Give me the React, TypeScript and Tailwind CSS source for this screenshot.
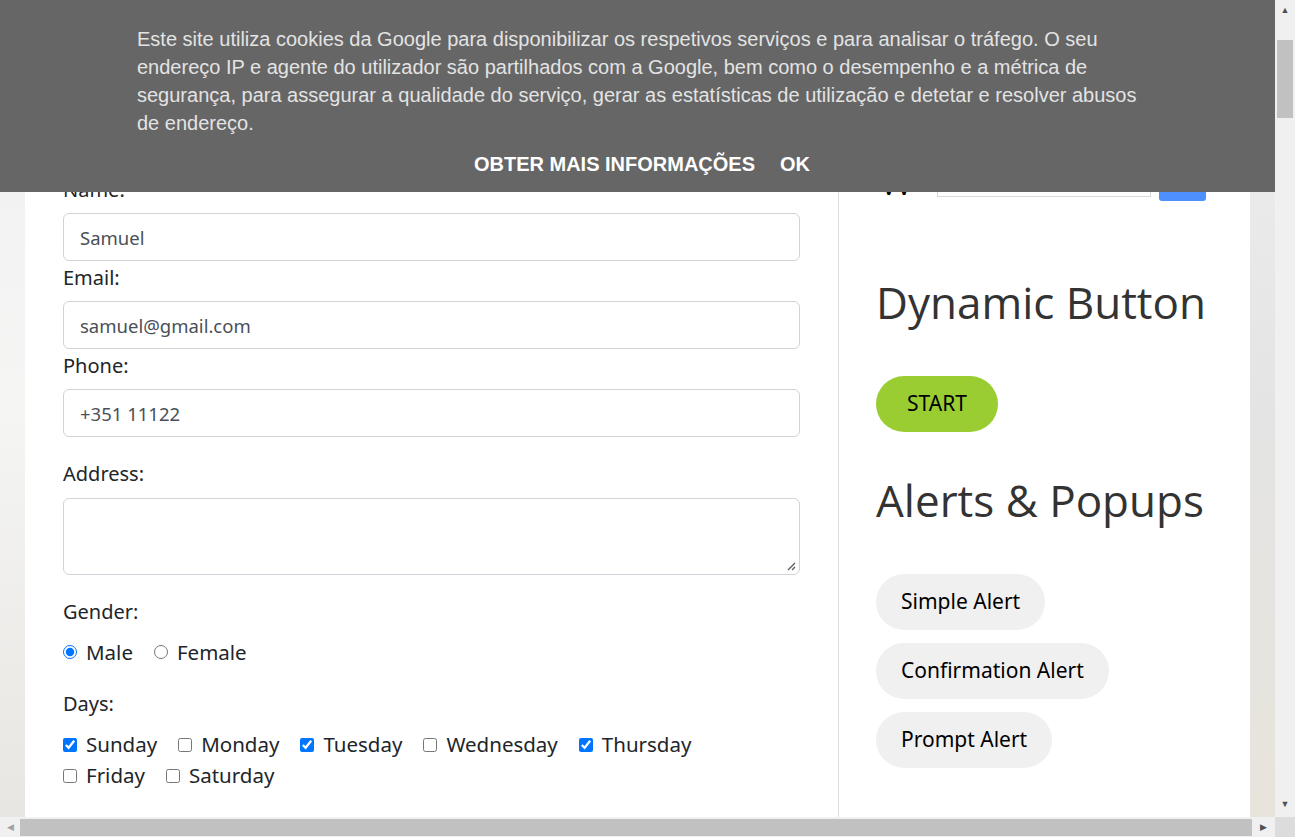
import React from "react";

const days = [
  { name: "Sunday", checked: true },
  { name: "Monday", checked: false },
  { name: "Tuesday", checked: true },
  { name: "Wednesday", checked: false },
  { name: "Thursday", checked: true },
];

function Check({ name, checked }: { name: string; checked: boolean }) {
  return (
    <label className="flex items-center gap-[9px]">
      <input type="checkbox" defaultChecked={checked} className="m-0 h-[14px] w-[14px] shrink-0" />
      <span>{name}</span>
    </label>
  );
}

function Field({ label, value }: { label: string; value: string }) {
  return (
    <div>
      <div className="h-[30px] pt-[2px] leading-[30px] mb-[10px]">{label}</div>
      <div className="flex h-[48px] items-center rounded-[6px] border border-[#ced4da] px-[16px] pt-[1px] text-[18.5px] text-[#495057]">
        {value}
      </div>
    </div>
  );
}

export default function App() {
  return (
    <div className="relative h-screen w-screen overflow-hidden bg-white font-['Noto_Sans',sans-serif] text-[20px] text-[#212529]">
      <div className="flex h-[817px]">
        <div className="w-[25px] bg-gradient-to-b from-[#eef0ef] via-[#f5f5f4] to-[#e8e6e2]"></div>
        <div className="flex w-[1225px] bg-white">
          {/* form column */}
          <div className="w-[814px] border-r border-[#dedede] pl-[38px] pr-[38px] pt-[173px]">
            <Field label="Name:" value="Samuel" />
            <Field label="Email:" value="samuel@gmail.com" />
            <Field label="Phone:" value="+351 11122" />
            <div className="mt-[21px] mb-[10px] h-[30px] pt-[1px] leading-[30px]">Address:</div>
            <div className="relative h-[77px] rounded-[6px] border border-[#ced4da]">
              <svg viewBox="0 0 10 10" className="absolute bottom-[3px] right-[3px] h-[10px] w-[10px]">
                <path d="M9 2L2 9M9 6L6 9" stroke="#555" strokeWidth="1.2" />
              </svg>
            </div>
            <div className="mt-[21px] h-[30px] pt-[1px] leading-[30px]">Gender:</div>
            <div className="mt-[11px] flex h-[30px] items-center gap-[21px] text-[20.5px]">
              <label className="flex items-center gap-[9px]">
                <input type="radio" name="gender" defaultChecked className="m-0 h-[14px] w-[14px]" />
                <span>Male</span>
              </label>
              <label className="flex items-center gap-[9px]">
                <input type="radio" name="gender" className="m-0 h-[14px] w-[14px]" />
                <span>Female</span>
              </label>
            </div>
            <div className="mt-[21px] h-[30px] pt-[1px] leading-[30px]">Days:</div>
            <div className="mt-[11px] flex flex-wrap gap-x-[21px] text-[20.5px] leading-[31px]">
              {days.map((d) => (
                <Check key={d.name} name={d.name} checked={d.checked} />
              ))}
            </div>
            <div className="flex gap-x-[21px] text-[20.5px] leading-[31px]">
              <Check name="Friday" checked={false} />
              <Check name="Saturday" checked={false} />
            </div>
          </div>
          {/* side column */}
          <div className="w-[411px] pl-[37px] pt-[163px]">
            <div className="flex h-[38px] items-end">
              <span className="w-[40px] font-['Liberation_Serif',serif] text-[40px] font-bold leading-[40px] text-black">W</span>
              <span className="mb-[4px] ml-[21px] h-[34px] w-[214px] border border-[#d9d9d9] bg-white"></span>
              <span className="ml-[8px] h-[38px] w-[47px] rounded-[3px] bg-[#4d90fe]"></span>
            </div>
            <h2 className="mt-[75px] font-['Open_Sans',sans-serif] text-[44px] leading-[53px] text-[#333]">Dynamic Button</h2>
            <button className="mt-[47px] h-[56px] rounded-full bg-[#9acd32] px-[31px] text-[21px] text-black">START</button>
            <h2 className="mt-[42px] font-['Open_Sans',sans-serif] text-[44px] leading-[53px] text-[#333]">Alerts &amp; Popups</h2>
            <div className="mt-[47px] flex flex-col items-start gap-[13px]">
              <button className="h-[56px] rounded-full bg-[#f0f0f0] px-[25px] text-[21px] text-black">Simple Alert</button>
              <button className="h-[56px] rounded-full bg-[#f0f0f0] px-[25px] text-[21px] text-black">Confirmation Alert</button>
              <button className="h-[56px] rounded-full bg-[#f0f0f0] px-[25px] text-[21px] text-black">Prompt Alert</button>
            </div>
          </div>
        </div>
        <div className="w-[25px] bg-gradient-to-b from-[#eef0ee] via-[#e4e4e4] to-[#e8e4dc]"></div>
        {/* vertical scrollbar */}
        <div className="flex w-[20px] flex-col items-center bg-[#f0f0f0]">
          <span className="mt-[5px] text-[9px] leading-[10px] text-[#505050]">▲</span>
          <span className="mt-[25px] h-[78px] w-[16px] bg-[#c1c1c1]"></span>
          <span className="mt-auto mb-[8px] text-[9px] leading-[10px] text-[#505050]">▼</span>
        </div>
      </div>
      {/* horizontal scrollbar */}
      <div className="flex h-[20px] items-center bg-[#f0f0f0]">
        <span className="w-[20px] text-center text-[9px] text-[#a3a3a3]">◀</span>
        <span className="h-[17px] w-[1232px] bg-[#c1c1c1]"></span>
        <span className="w-[23px] text-center text-[9px] text-[#505050]">▶</span>
        <span className="h-[20px] w-[20px] bg-[#dcdcdc]"></span>
      </div>
      {/* cookie banner */}
      <div className="absolute left-0 right-[20px] top-0 h-[192px] bg-[#666] font-['Liberation_Sans',Arial,sans-serif]">
        <div className="mx-auto w-[1001px] pt-[25px] text-[20px] leading-[28px] text-[#e3e3e3]">
          Este site utiliza cookies da Google para disponibilizar os respetivos serviços e para analisar o tráfego. O seu endereço IP e agente do utilizador são partilhados com a Google, bem como o desempenho e a métrica de segurança, para assegurar a qualidade do serviço, gerar as estatísticas de utilização e detetar e resolver abusos de endereço.
        </div>
        <div className="mt-[13px] flex justify-center gap-[25px] pl-[9px] text-[20px] font-bold leading-[28px] text-white">
          <span>OBTER MAIS INFORMAÇÕES</span>
          <span>OK</span>
        </div>
      </div>
    </div>
  );
}
